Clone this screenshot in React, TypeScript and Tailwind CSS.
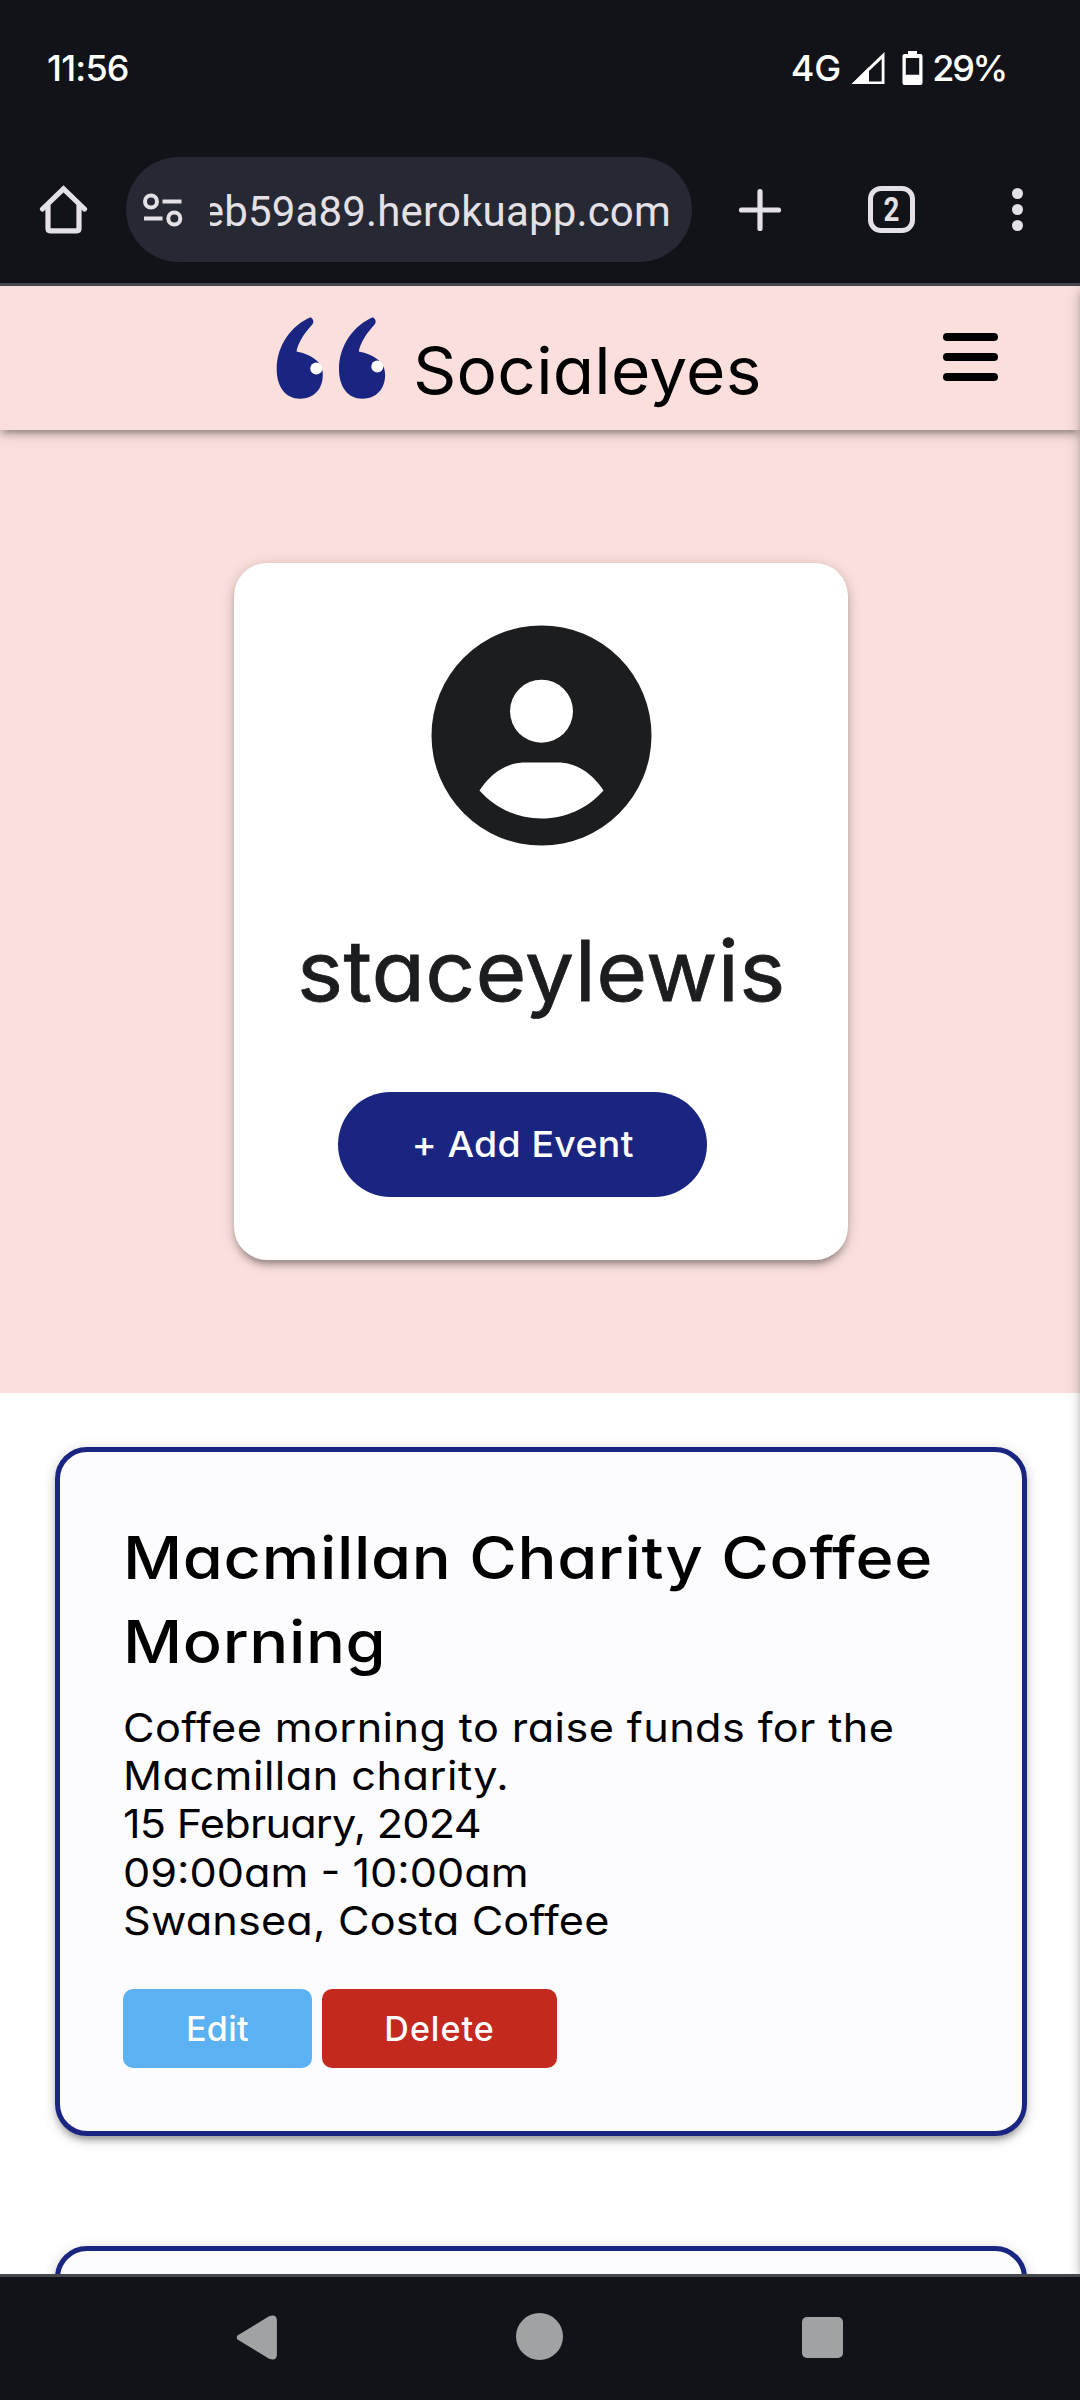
import type { ReactNode } from 'react';

const elevation =
  'shadow-[0_5.5px_5.5px_rgba(0,0,0,0.14),0_8px_3px_-5.5px_rgba(0,0,0,0.12),0_3px_14px_rgba(0,0,0,0.2)]';

function StatusBar() {
  return (
    <div className="flex h-[132px] items-start pt-[46px] pl-[47px] pr-[74px] text-[36px] leading-[44px] font-medium text-white">
      <span className="tracking-[-0.8px]">11:56</span>
      <div className="ml-auto flex items-start">
        <span>4G</span>
        <svg className="mt-[6px] ml-[10px] h-[33px] w-[34px]" viewBox="0 0 34 33" fill="none">
          <path d="M1 32 18 15V32Z" fill="#fff" />
          <path d="M33.5 0V32H0.5Z M30.7 7 18 19V29.5H30.7Z" fill="#fff" fillRule="evenodd" />
        </svg>
        <svg className="mt-[5px] ml-[17px] h-[34px] w-[21px]" viewBox="0 0 21 34">
          <path
            d="M6 0H15V3H18.5Q20.5 3 20.5 5V32Q20.5 34 18.5 34H2.500Q.5 34 .5 32V5Q.5 3 2.500 3H6Z M3.800 7V23.700H17.200V7Z"
            fill="#fff"
            fillRule="evenodd"
          />
        </svg>
        <span className="ml-[9px] tracking-[-2.3px]">29%</span>
      </div>
    </div>
  );
}

function BrowserBar() {
  return (
    <div className="flex h-[154px] items-start border-b-[3px] border-[#47464f] pt-[25px] text-[#e4e1e6]">
      <svg className="mt-[28px] ml-[39px] h-[50px] w-[49px]" viewBox="0 0 49 50" fill="none" stroke="#e4e1e6" strokeWidth="5.2">
        <path d="M3.500 24 24.500 3.800 45.500 24" strokeLinecap="round" />
        <path d="M9 19V43.500Q9 45.800 11.200 45.800H37.800Q40 45.800 40 43.500V19" />
      </svg>
      <div className="ml-[38px] flex h-[105px] w-[566px] items-center rounded-full bg-[#262833] pl-[17px]">
        <svg className="h-[34px] w-[40px]" viewBox="0 0 40 34" fill="none" stroke="#e4e1e6" strokeWidth="4">
          <circle cx="8" cy="8.500" r="6" />
          <path d="M19.500 8.500H38.500M1 25.500H19.500" />
          <circle cx="31.300" cy="25.500" r="6" />
        </svg>
        <div className="ml-[27px] flex w-[461px] justify-end overflow-hidden pt-[4px] font-['Roboto'] text-[42px] leading-[56px] tracking-[0.17px] whitespace-nowrap">
          eb59a89.herokuapp.com
        </div>
      </div>
      <svg className="mt-[31px] ml-[46px] h-[44px] w-[44px]" viewBox="0 0 44 44" stroke="#e4e1e6" strokeWidth="5.200" strokeLinecap="round">
        <path d="M22 3.500V40.500M3.500 22H40.500" />
      </svg>
      <div className="mt-[29px] ml-[86px] flex h-[47px] w-[47px] items-center justify-center rounded-[13px] border-[5px] border-[#e4e1e6] font-['Roboto'] text-[33px] leading-[36px] font-bold">
        <span className="scale-x-[0.84]">2</span>
      </div>
      <div className="mt-[31px] ml-[97px] flex flex-col gap-[5px]">
        <i className="size-[11px] rounded-full bg-[#e4e1e6]" />
        <i className="size-[11px] rounded-full bg-[#e4e1e6]" />
        <i className="size-[11px] rounded-full bg-[#e4e1e6]" />
      </div>
    </div>
  );
}

const quote =
  'M34.700 0.300C36 1.500 37.800 3 37.300 5.500C37 7 36 7.800 35 9C28 16.500 22 26 20.500 34.500C29 36 38 40 42.500 45.500C46 49.500 46.800 54 46.800 58C46.800 72 38 81.700 24 81.700C9.500 81.700 0.700 70 0.700 52C0.700 28 16 8 34.700 0.300Z';

function Header() {
  return (
    <header className={`relative z-10 flex h-[144px] items-start bg-[#fadfdc] ${elevation}`}>
      <svg className="mt-[31px] ml-[276px] h-[84px] w-[112px]" viewBox="0 0 112 84">
        <path d={quote} fill="#1a2582" />
        <path d={quote} fill="#1a2582" transform="translate(62.300 0)" />
        <circle cx="40.300" cy="51.500" r="6" fill="#fff" />
        <circle cx="101.300" cy="49.500" r="6" fill="#fff" />
      </svg>
      <span className="mt-[45px] ml-[25px] inline-block origin-left scale-x-[1.04] text-[65px] leading-[80px] tracking-[0.2px] text-black [font-feature-settings:'cv11']">
        Socialeyes
      </span>
      <div className="mt-[47px] mr-[82px] ml-auto flex flex-col gap-[12px]">
        <i className="h-[8px] w-[55px] rounded-full bg-black" />
        <i className="h-[8px] w-[55px] rounded-full bg-black" />
        <i className="h-[8px] w-[55px] rounded-full bg-black" />
      </div>
    </header>
  );
}

function Profile() {
  return (
    <section className="flex h-[963px] justify-center bg-[#fadfdc] pt-[133px] pl-[2px]">
      <div className={`flex h-[697px] w-[614px] flex-col rounded-[33px] bg-white ${elevation}`}>
        <svg className="mt-[62px] ml-[196.5px] h-[221px] w-[221px] shrink-0" viewBox="0 0 221 221">
          <circle cx="110.500" cy="110.500" r="110" fill="#1c1d1f" />
          <circle cx="110.500" cy="86.200" r="31.500" fill="#fff" />
          <path d="M48.500 165.500C60 148 76 137.500 94 137.500H127C145 137.500 161 148 172.500 165.500C156 184 134 193.500 110.500 193.500C87 193.500 65 184 48.500 165.500Z" fill="#fff" />
        </svg>
        <h1 className="mt-[75px] ml-[63px] origin-left scale-x-[1.04] self-start text-[84px] leading-[100px] tracking-[0.3px] text-[#1c1d1f] [font-feature-settings:'cv11'] [-webkit-text-stroke:0.8px_#1c1d1f] [stroke-linejoin:round]">
          staceylewis
        </h1>
        <button className="mt-[71px] ml-[104px] h-[105px] w-[369px] rounded-full bg-[#1a2582] pb-[2px] text-[36px] font-medium tracking-[0.35px] whitespace-nowrap text-white [font-feature-settings:'cv11']">
          <span className="inline-block scale-x-[1.04]">+ Add Event</span>
        </button>
      </div>
    </section>
  );
}

function CardShell({ children }: { children?: ReactNode }) {
  return (
    <article className={`h-[689px] shrink-0 rounded-[32px] border-[5px] border-[#1a2582] bg-[#fcfcff] pt-[64px] pl-[63px] text-black [font-feature-settings:'cv11'] ${elevation}`}>
      {children}
    </article>
  );
}

function Line({ className, children }: { className: string; children: ReactNode }) {
  return <p className={`origin-left scale-x-[1.08] whitespace-nowrap ${className}`}>{children}</p>;
}

function EventCard() {
  return (
    <CardShell>
      <h2 className="origin-left scale-x-[1.1] text-[59px] leading-[84px] font-medium tracking-[0.57px] whitespace-nowrap">
        Macmillan Charity Coffee
        <br />
        Morning
      </h2>
      <div className="mt-[20px] flex flex-col items-start text-[40px] leading-[48.2px] font-normal">
        <Line className="tracking-[0.37px]">Coffee morning to raise funds for the</Line>
        <Line className="tracking-[0.45px]">Macmillan charity.</Line>
        <Line className="tracking-[-0.7px]">15 February, 2024</Line>
        <Line className="tracking-[0px]">09:00am - 10:00am</Line>
        <Line className="tracking-[0.17px]">Swansea, Costa Coffee</Line>
      </div>
      <div className="mt-[44px] flex gap-[10px] text-[34px] font-medium text-white">
        <button className="h-[79px] w-[189px] rounded-[10px] bg-[#5bb1f2] pb-[1px] tracking-[0.3px]">Edit</button>
        <button className="h-[79px] w-[235px] rounded-[10px] bg-[#c3291f] pb-[1px] tracking-[1px]">Delete</button>
      </div>
    </CardShell>
  );
}

function NavigationBar() {
  return (
    <nav className="flex h-[126px] items-start border-t-[3px] border-[#47484d] bg-[#111318]">
      <svg className="mt-[37px] ml-[236px] h-[47px] w-[42px]" viewBox="0 0 42 47">
        <path d="M1.500 21.500 33 2.200Q40.700 -.5 40.900 6.500V40.500Q40.700 47.500 33 44.800L1.500 25.500Q0 23.500 1.500 21.500Z" fill="#a1a2a4" />
      </svg>
      <i className="mt-[36px] ml-[238px] size-[47px] rounded-full bg-[#a1a2a4]" />
      <i className="mt-[40px] ml-[239px] size-[41px] rounded-[5px] bg-[#a1a2a4]" />
    </nav>
  );
}

export default function App() {
  return (
    <div className="flex h-[2400px] w-[1080px] flex-col overflow-hidden bg-[#111318] font-['Inter',sans-serif]">
      <StatusBar />
      <BrowserBar />
      <main className="relative h-[1988px] overflow-hidden bg-white">
        <Header />
        <Profile />
        <div className="flex flex-col gap-[110px] pt-[54px] pr-[53px] pl-[55px]">
          <EventCard />
          <CardShell />
        </div>
        {/* Off-canvas menu, closed: only its shadow reaches the page edge. */}
        <aside className={`absolute top-0 left-full z-20 h-full w-[300px] bg-white ${elevation}`} />
      </main>
      <NavigationBar />
    </div>
  );
}
